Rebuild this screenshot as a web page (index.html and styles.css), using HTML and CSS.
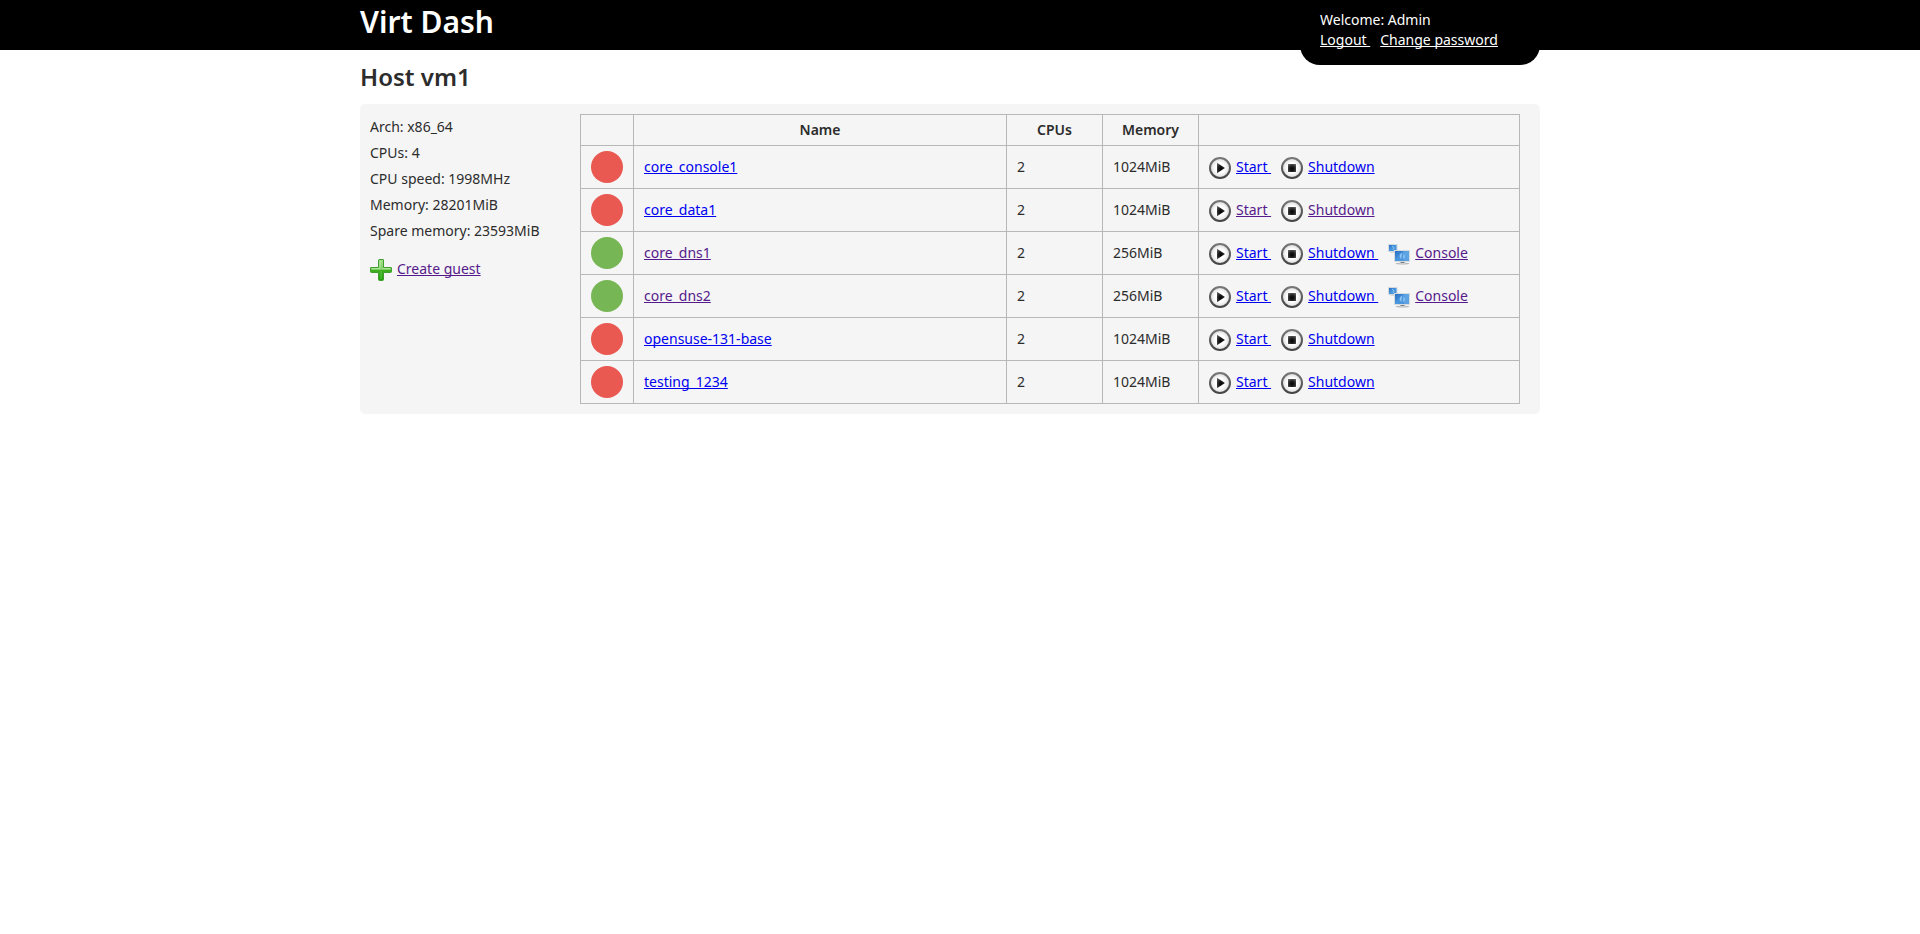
FILE: index.html
```html
<!DOCTYPE html>
<html lang="en">
<head>
<meta charset="utf-8">
<title>Virt Dash</title>
<link rel="stylesheet" href="styles.css">
</head>
<body>
<svg class="defs" aria-hidden="true">
  <defs>
    <linearGradient id="ring" x1="0" y1="0" x2="0" y2="1"><stop offset="0" stop-color="#777"/><stop offset="1" stop-color="#444"/></linearGradient>
    <radialGradient id="face"><stop offset="0.5" stop-color="#fff"/><stop offset="1" stop-color="#d8d8d8"/></radialGradient>
    <radialGradient id="ink" cx="0.5" cy="0.6" r="0.7"><stop offset="0" stop-color="#000"/><stop offset="0.5" stop-color="#222"/><stop offset="1" stop-color="#666"/></radialGradient>
    <linearGradient id="leaf" x1="0" y1="0" x2="0" y2="1"><stop offset="0" stop-color="#a5e08c"/><stop offset="0.48" stop-color="#7fd063"/><stop offset="0.52" stop-color="#3fae20"/><stop offset="1" stop-color="#1fa00c"/></linearGradient>
    <linearGradient id="screen" x1="0" y1="0" x2="1" y2="1"><stop offset="0" stop-color="#2468bd"/><stop offset="0.5" stop-color="#4a98e0"/><stop offset="1" stop-color="#4a8fd6"/></linearGradient>
    <symbol id="play" viewBox="0 0 22 22">
      <circle cx="11" cy="11" r="10" fill="url(#face)" stroke="url(#ring)" stroke-width="2"/>
      <path d="M8 5.8 L16 11 L8 16.2 Z" fill="url(#ink)"/>
    </symbol>
    <symbol id="stop" viewBox="0 0 22 22">
      <circle cx="11" cy="11" r="10" fill="url(#face)" stroke="url(#ring)" stroke-width="2"/>
      <rect x="7" y="7" width="8" height="8" fill="url(#ink)"/>
    </symbol>
    <symbol id="screens" viewBox="0 0 22 22">
      <path d="M3 8 H6 V9.5 H2.5 Z" fill="#b9bec2"/>
      <rect x="0.5" y="1.5" width="8.5" height="7" fill="url(#screen)" stroke="#d3d9dd"/>
      <path d="M4 3 L6 5 L5 7" fill="none" stroke="#8ec4f2"/>
      <ellipse cx="14.5" cy="20.6" rx="7" ry="1" fill="#b5b8ba"/>
      <path d="M12.5 18 H16.5 L17.5 20.5 H11.5 Z" fill="#e2e5e7"/>
      <rect x="12.5" y="19" width="4" height="1" fill="#777c80"/>
      <rect x="6.5" y="7.5" width="15" height="11" fill="url(#screen)" stroke="#d6dbde"/>
      <path d="M15 8 L21 8 V18 L16 18 Z" fill="#7db9ee" opacity="0.4"/>
      <path d="M14.5 9.5 C11 11 10.8 14 13.5 16 C13 13.500 14 11.500 14.500 9.500 M15.500 11 C17.500 12.500 17 15 15 16" fill="#a6d2f5" opacity="0.8"/>
    </symbol>
    <symbol id="plus" viewBox="0 0 22 22">
      <path d="M9 0.500 H13 Q13.500 0.500 13.500 1 V8.500 H21 Q21.500 8.500 21.500 9 V12.500 Q21.500 13.500 20.500 13.500 H13.500 V20.500 Q13.500 21.500 12.500 21.500 H9.500 Q8.500 21.500 8.500 20.500 V13.500 H1.500 Q0.500 13.500 0.500 12.500 V9 Q0.500 8.500 1 8.500 H8.500 V1 Z" fill="url(#leaf)" stroke="#3e9d2d"/>
      <path d="M10 2 V9.500 H2 M12.500 9.500 H20" fill="none" stroke="#c8f0b8" opacity="0.6"/>
      <path d="M11 12 V20" fill="none" stroke="#7fe060" opacity="0.6"/>
    </symbol>
  </defs>
</svg>
<header class="topbar">
  <div class="wrap topbar-inner">
    <h1 class="brand">Virt Dash</h1>
    <div class="account">
      <div>Welcome: Admin</div>
      <nav class="links"><a href="#logout">Logout </a><a href="#password">Change password</a></nav>
    </div>
  </div>
</header>
<main class="wrap">
  <h2 class="title">Host vm1</h2>
  <section class="panel">
    <aside class="facts">
      <p>Arch: x86_64</p>
      <p>CPUs: 4</p>
      <p>CPU speed: 1998MHz</p>
      <p>Memory: 28201MiB</p>
      <p>Spare memory: 23593MiB</p>
      <div class="create action"><svg class="icon"><use href="#plus"/></svg><a class="seen" href="#create">Create guest</a></div>
    </aside>
    <table class="guests">
      <colgroup><col class="c-state"><col><col class="c-num"><col class="c-num"><col class="c-actions"></colgroup>
      <thead><tr><th></th><th>Name</th><th>CPUs</th><th>Memory</th><th></th></tr></thead>
      <tbody>
        <tr><td><div class="dot off"></div></td><td><a href="#g1">core_console1</a></td><td>2</td><td>1024MiB</td>
          <td><div class="links"><span class="action"><svg class="icon"><use href="#play"/></svg><a href="#start1">Start </a></span><span class="action"><svg class="icon"><use href="#stop"/></svg><a href="#stop1">Shutdown</a></span></div></td></tr>
        <tr><td><div class="dot off"></div></td><td><a href="#g2">core_data1</a></td><td>2</td><td>1024MiB</td>
          <td><div class="links"><span class="action"><svg class="icon"><use href="#play"/></svg><a class="seen" href="#start2">Start </a></span><span class="action"><svg class="icon"><use href="#stop"/></svg><a class="seen" href="#stop2">Shutdown</a></span></div></td></tr>
        <tr><td><div class="dot on"></div></td><td><a class="seen" href="#g3">core_dns1</a></td><td>2</td><td>256MiB</td>
          <td><div class="links"><span class="action"><svg class="icon"><use href="#play"/></svg><a href="#start3">Start </a></span><span class="action"><svg class="icon"><use href="#stop"/></svg><a href="#stop3">Shutdown </a></span><span class="action"><svg class="icon"><use href="#screens"/></svg><a class="seen" href="#console3">Console</a></span></div></td></tr>
        <tr><td><div class="dot on"></div></td><td><a class="seen" href="#g4">core_dns2</a></td><td>2</td><td>256MiB</td>
          <td><div class="links"><span class="action"><svg class="icon"><use href="#play"/></svg><a href="#start4">Start </a></span><span class="action"><svg class="icon"><use href="#stop"/></svg><a href="#stop4">Shutdown </a></span><span class="action"><svg class="icon"><use href="#screens"/></svg><a class="seen" href="#console4">Console</a></span></div></td></tr>
        <tr><td><div class="dot off"></div></td><td><a href="#g5">opensuse-131-base</a></td><td>2</td><td>1024MiB</td>
          <td><div class="links"><span class="action"><svg class="icon"><use href="#play"/></svg><a href="#start5">Start </a></span><span class="action"><svg class="icon"><use href="#stop"/></svg><a href="#stop5">Shutdown</a></span></div></td></tr>
        <tr><td><div class="dot off"></div></td><td><a href="#g6">testing_1234</a></td><td>2</td><td>1024MiB</td>
          <td><div class="links"><span class="action"><svg class="icon"><use href="#play"/></svg><a href="#start6">Start </a></span><span class="action"><svg class="icon"><use href="#stop"/></svg><a href="#stop6">Shutdown</a></span></div></td></tr>
      </tbody>
    </table>
  </section>
</main>
</body>
</html>
```
FILE: styles.css
```css
* { box-sizing: border-box; }
body { margin: 0; background: #fff; color: #2c2c2c; font: 14px/20px "Noto Sans", "Open Sans", sans-serif; }
.defs { position: absolute; width: 0; height: 0; }
.wrap { max-width: 1200px; margin: 0 auto; padding-right: 20px; }
.topbar { height: 50px; background: #000; color: #fff; }
.topbar-inner { display: flex; justify-content: space-between; align-items: flex-start; }
.brand { margin: 0; font-size: 30px; line-height: 44px; font-weight: 600; }
.account { width: 240px; padding: 10px 20px 15px; background: #000; border-radius: 0 0 20px 20px; }
.account .links { color: #fff; }
.title { margin: 0; padding: 10px 0; font-size: 24px; line-height: 34px; font-weight: 600; }
.panel { display: flex; align-items: flex-start; padding: 10px 20px 10px 10px; background: #f5f5f5; border-radius: 5px; }
.facts { flex: 0 0 210px; }
.facts p { margin: 0; padding: 3px 0; }
.create { margin-top: 13px; }
.guests { flex: 1; width: 100%; table-layout: fixed; border-collapse: collapse; }
.c-state { width: 53px; }
.c-num { width: 96px; }
.c-actions { width: 321px; }
.guests th, .guests td { border: 1px solid #b8b8b8; padding: 5px 10px; }
.guests th { font-weight: 600; }
.dot { width: 32px; height: 32px; border-radius: 50%; }
.off { background: #e95851; }
.on { background: #77b654; }
a { color: #0000ee; white-space: pre; text-decoration-skip-ink: none; }
.seen { color: #551a8b; }
.account a { color: inherit; }
.links { display: flex; gap: 10px; }
.action { display: flex; gap: 5px; align-items: center; }
.icon { width: 22px; height: 22px; flex: none; margin-top: 2px; }
```
